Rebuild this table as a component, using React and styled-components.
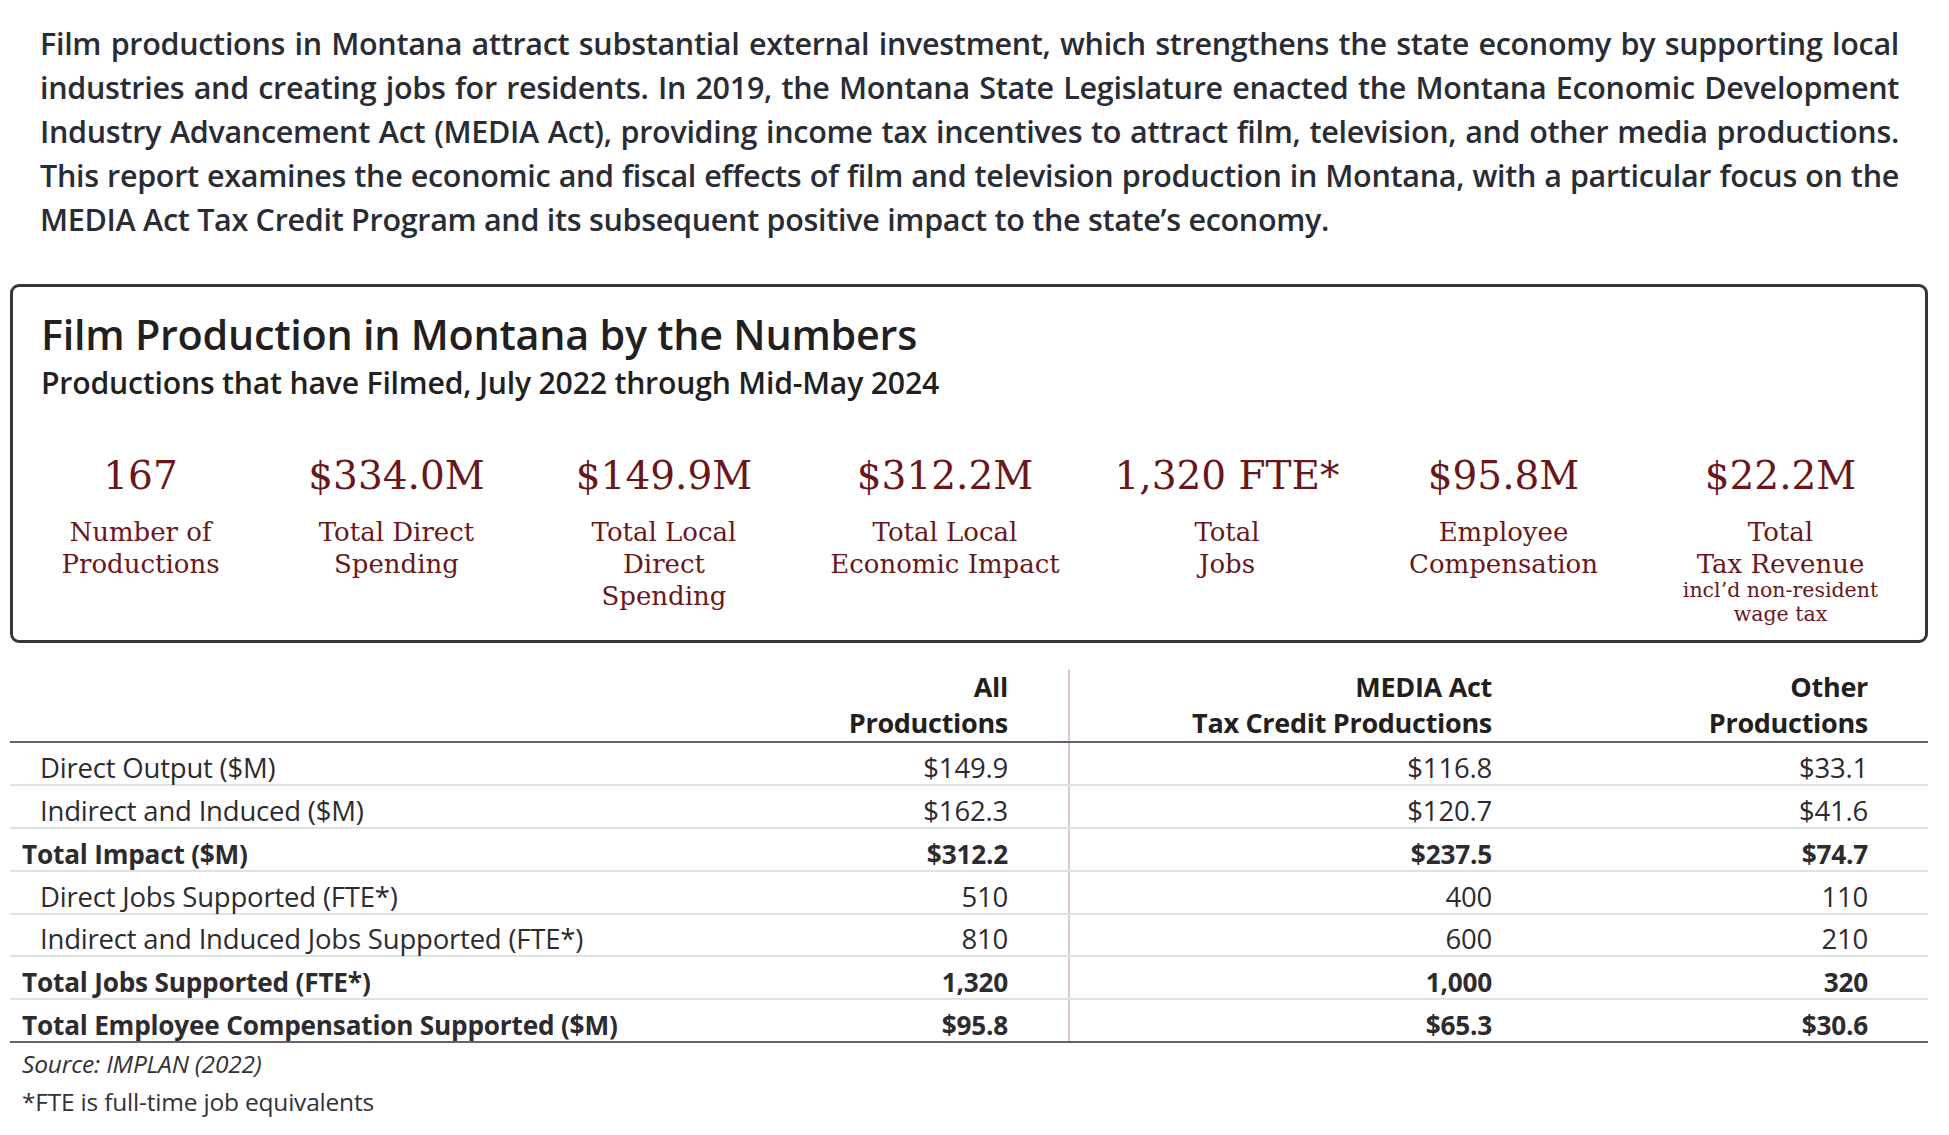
import styled, { createGlobalStyle } from 'styled-components';

const GlobalStyle = createGlobalStyle`
  body {
    margin: 0;
    background: #ffffff;
  }
`;

const Page = styled.div`
  width: 1918px;
  margin-left: 10px;
  padding-top: 21px;
  font-family: "Open Sans", "Noto Sans", sans-serif;
`;

const Intro = styled.p`
  margin: 0 29px 0 30px;
  font-size: 30.5px;
  font-weight: 600;
  line-height: 44px;
  letter-spacing: -0.3px;
  color: #2a2c35;
`;

const IntroLine = styled.span`
  display: block;
  text-align: ${(p) => (p.$last ? 'left' : 'justify')};
  text-align-last: ${(p) => (p.$last ? 'left' : 'justify')};
`;

const NumbersBox = styled.section`
  margin-top: 43px;
  border: 3px solid #38353a;
  border-radius: 9px;
  padding: 21.7px 0 14px;
`;

const BoxTitle = styled.h2`
  margin: 0 0 0 28px;
  font-size: 41.3px;
  font-weight: 600;
  line-height: 50px;
  letter-spacing: -0.25px;
  color: #231f20;
`;

const BoxSubtitle = styled.h3`
  margin: 6.3px 0 0 28px;
  font-size: 30.2px;
  font-weight: 600;
  line-height: 36px;
  letter-spacing: -0.2px;
  color: #231f20;
`;

const StatRow = styled.div`
  display: grid;
  grid-template-columns: 253px 259px 276px 286px 278px 275px 279px;
  margin: 52px 0 0 1px;
`;

const Stat = styled.div`
  display: flex;
  flex-direction: column;
  align-items: center;
  text-align: center;
  font-family: "DejaVu Serif", "Liberation Serif", serif;
  color: #6a171b;
`;

const StatValue = styled.div`
  font-size: 39px;
  line-height: 46px;
  white-space: nowrap;
`;

const StatLabel = styled.div`
  margin-top: 17px;
  font-size: 26px;
  line-height: 32px;
`;

const StatNote = styled.div`
  margin-top: -2px;
  font-size: 20.5px;
  line-height: 24px;
`;

const Table = styled.div`
  margin-top: 26px;
  color: #2d2a30;
`;

const Row = styled.div`
  display: grid;
  grid-template-columns: 758px 300px 484px 376px;
  border-bottom: 2px solid ${(p) => p.$edge || '#dde3e1'};
`;

const HeadCell = styled.div`
  height: 72px;
  padding-right: 60px;
  text-align: right;
  font-size: 27px;
  font-weight: 700;
  line-height: 36px;
  letter-spacing: -0.3px;
  color: #231f20;
  border-left: ${(p) => (p.$rule ? '2px solid #dcc8da' : 'none')};
`;

const Cell = styled.div`
  height: 40.9px;
  display: flex;
  align-items: flex-end;
  justify-content: ${(p) => (p.$num ? 'flex-end' : 'flex-start')};
  padding-left: ${(p) => (p.$num ? 0 : p.$indent ? 30 : 12)}px;
  padding-right: ${(p) => (p.$num ? 60 : 0)}px;
  font-size: ${(p) => (p.$bold ? 26.2 : 27.5)}px;
  font-weight: ${(p) => (p.$bold ? 700 : 400)};
  line-height: 32px;
  letter-spacing: -0.2px;
  border-left: ${(p) => (p.$rule ? '2px solid #dcc8da' : 'none')};
`;

const Notes = styled.div`
  margin: 2px 0 0 12px;
  font-size: 24.5px;
  line-height: 38px;
  letter-spacing: -0.2px;
  color: #333036;
`;

const Source = styled.div`
  font-style: italic;
`;

const intro = [
  'Film productions in Montana attract substantial external investment, which strengthens the state economy by supporting local',
  'industries and creating jobs for residents. In 2019, the Montana State Legislature enacted the Montana Economic Development',
  'Industry Advancement Act (MEDIA Act), providing income tax incentives to attract film, television, and other media productions.',
  'This report examines the economic and fiscal effects of film and television production in Montana, with a particular focus on the',
  'MEDIA Act Tax Credit Program and its subsequent positive impact to the state’s economy.',
];

const stats = [
  { value: '167', label: ['Number of', 'Productions'] },
  { value: '$334.0M', label: ['Total Direct', 'Spending'] },
  { value: '$149.9M', label: ['Total Local', 'Direct', 'Spending'] },
  { value: '$312.2M', label: ['Total Local', 'Economic Impact'] },
  { value: '1,320 FTE*', label: ['Total', 'Jobs'] },
  { value: '$95.8M', label: ['Employee', 'Compensation'] },
  { value: '$22.2M', label: ['Total', 'Tax Revenue'], note: ['incl’d non-resident', 'wage tax'] },
];

const rows = [
  { label: 'Direct Output ($M)', values: ['$149.9', '$116.8', '$33.1'], indent: true },
  { label: 'Indirect and Induced ($M)', values: ['$162.3', '$120.7', '$41.6'], indent: true },
  { label: 'Total Impact ($M)', values: ['$312.2', '$237.5', '$74.7'], bold: true },
  { label: 'Direct Jobs Supported (FTE*)', values: ['510', '400', '110'], indent: true },
  { label: 'Indirect and Induced Jobs Supported (FTE*)', values: ['810', '600', '210'], indent: true },
  { label: 'Total Jobs Supported (FTE*)', values: ['1,320', '1,000', '320'], bold: true },
  { label: 'Total Employee Compensation Supported ($M)', values: ['$95.8', '$65.3', '$30.6'], bold: true },
];

function lines(list) {
  return list.map((line, i) => (
    <span key={i}>
      {i > 0 && <br />}
      {line}
    </span>
  ));
}

export default function App() {
  return (
    <>
      <GlobalStyle />
      <Page>
        <Intro>
          {intro.map((line, i) => (
            <IntroLine key={i} $last={i === intro.length - 1}>{line}</IntroLine>
          ))}
        </Intro>

        <NumbersBox>
          <BoxTitle>Film Production in Montana by the Numbers</BoxTitle>
          <BoxSubtitle>Productions that have Filmed, July 2022 through Mid-May 2024</BoxSubtitle>
          <StatRow>
            {stats.map((s) => (
              <Stat key={s.value}>
                <StatValue>{s.value}</StatValue>
                <StatLabel>{lines(s.label)}</StatLabel>
                {s.note && <StatNote>{lines(s.note)}</StatNote>}
              </Stat>
            ))}
          </StatRow>
        </NumbersBox>

        <Table>
          <Row $edge="#6e5d70">
            <HeadCell />
            <HeadCell>All<br />Productions</HeadCell>
            <HeadCell $rule>MEDIA Act<br />Tax Credit Productions</HeadCell>
            <HeadCell>Other<br />Productions</HeadCell>
          </Row>
          {rows.map((r, i) => (
            <Row key={r.label} $edge={i === rows.length - 1 ? '#6e5d70' : undefined}>
              <Cell $indent={r.indent} $bold={r.bold}>{r.label}</Cell>
              {r.values.map((v, j) => (
                <Cell key={j} $num $bold={r.bold} $rule={j === 1}>{v}</Cell>
              ))}
            </Row>
          ))}
        </Table>

        <Notes>
          <Source>Source: IMPLAN (2022)</Source>
          <div>*FTE is full-time job equivalents</div>
        </Notes>
      </Page>
    </>
  );
}
